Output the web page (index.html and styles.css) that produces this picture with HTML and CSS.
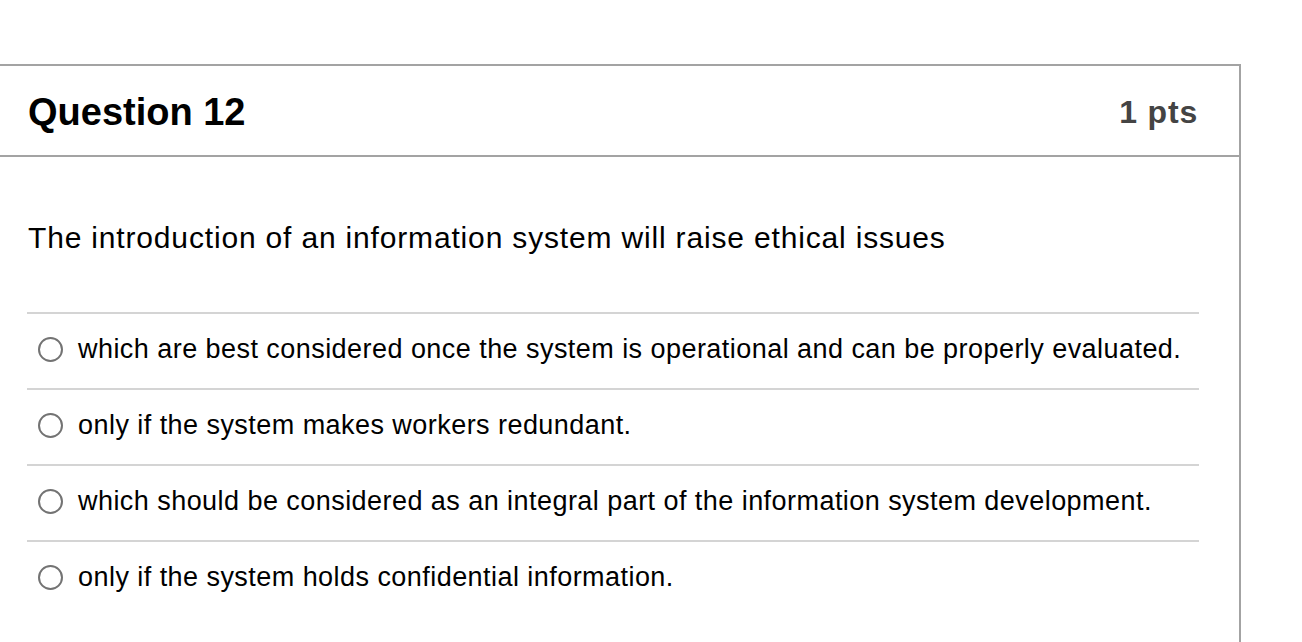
FILE: index.html
```html
<!DOCTYPE html>
<html>
<head>
<meta charset="utf-8">
<link rel="stylesheet" href="styles.css">
</head>
<body>
<div class="page">
  <div class="question">
    <div class="q-header">
      <h2 class="q-title">Question 12</h2>
      <span class="q-points">1 pts</span>
    </div>
    <div class="q-body">
      <p class="q-text">The introduction of an information system will raise ethical issues</p>
      <div class="answers">
        <label class="answer"><span class="radio"></span><span class="answer-text">which are best considered once the system is operational and can be properly evaluated.</span></label>
        <label class="answer"><span class="radio"></span><span class="answer-text">only if the system makes workers redundant.</span></label>
        <label class="answer"><span class="radio"></span><span class="answer-text">which should be considered as an integral part of the information system development.</span></label>
        <label class="answer"><span class="radio"></span><span class="answer-text">only if the system holds confidential information.</span></label>
      </div>
    </div>
  </div>
</div>
</body>
</html>
```

FILE: styles.css
```css
* { box-sizing: border-box; }
html, body { margin: 0; padding: 0; background: #fff; }
body {
  font-family: "Liberation Sans", Arial, sans-serif;
  color: #000;
  overflow: hidden;
  height: 642px;
}
.page { padding-top: 64px; }
.question {
  width: 1243px;
  margin-left: -2px;
  border: 2px solid #a3a3a3;
  border-bottom: none;
  height: 600px;
}
.q-header {
  height: 91px;
  border-bottom: 2px solid #a3a3a3;
  display: flex;
  align-items: center;
  justify-content: space-between;
  padding: 0 41px 0 28px;
}
.q-title {
  margin: 0;
  font-size: 38px;
  font-weight: bold;
  line-height: 44px;
  color: #000;
  padding-top: 2px;
}
.q-points {
  font-size: 32px;
  font-weight: bold;
  letter-spacing: 0.8px;
  line-height: 38px;
  color: #444;
  padding-top: 2px;
}
.q-body { padding: 0 40px 0 27px; }
.q-text {
  margin: 0;
  padding: 63px 0 57px 1px;
  font-size: 30px;
  letter-spacing: 0.83px;
  line-height: 35px;
}
.answers { display: flex; flex-direction: column; }
.answer {
  display: flex;
  align-items: center;
  height: 76px;
  border-top: 2px solid #d4d4d4;
  padding-bottom: 4px;
}
.radio {
  width: 25px;
  height: 25px;
  border: 2px solid #737373;
  border-radius: 50%;
  margin-left: 11px;
  margin-right: 15px;
  flex: none;
}
.answer-text {
  font-size: 27px;
  letter-spacing: 0.45px;
  line-height: 30px;
}
```
